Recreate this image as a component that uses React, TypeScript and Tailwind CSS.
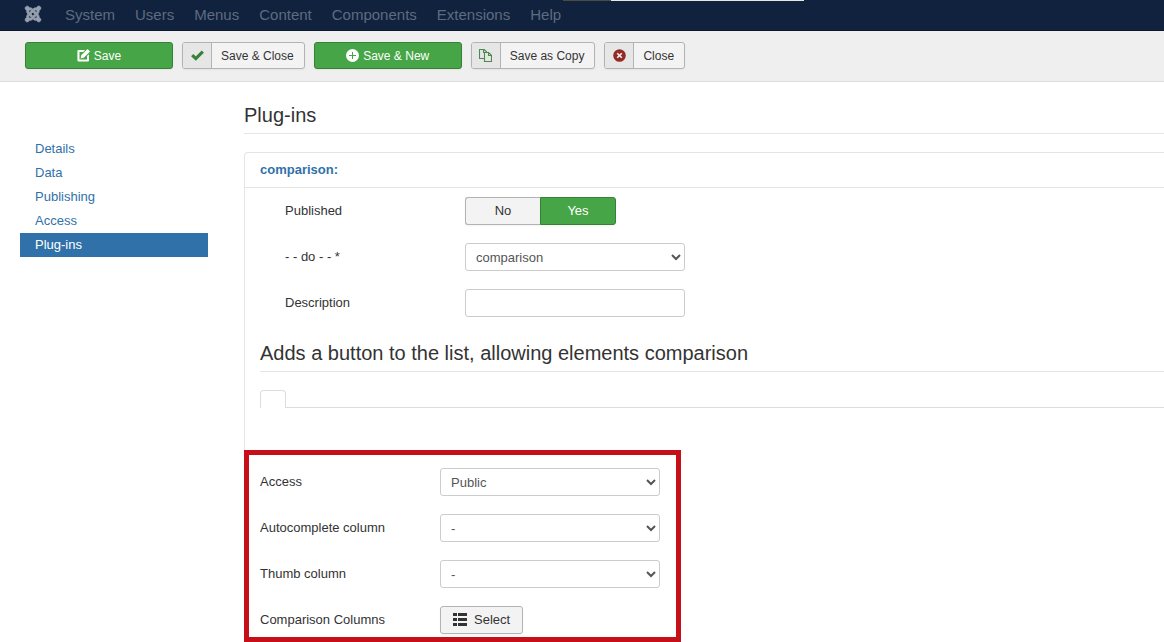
import type { ReactNode } from "react";
import { FaJoomla } from "react-icons/fa";

const menu = ["System", "Users", "Menus", "Content", "Components", "Extensions", "Help"];
const tabs = ["Details", "Data", "Publishing", "Access", "Plug-ins"];

function EditIcon() {
  return (
    <svg viewBox="0 0 13 13" className="size-[13px]" aria-hidden="true">
      <path fill="currentColor" fillRule="evenodd" d="M1.5 1H8L6.2 3H2.5V10.5H10V7L12 5.2V11.2Q12 12.5 10.7 12.5H1.6Q.4 12.5 .4 11.2V2.2Q.4 1 1.5 1Z" />
      <path fill="currentColor" d="M3.6 9.5 4.2 6.2 10 .4Q10.6-.1 11.1.4L12.6 1.9Q13.1 2.4 12.6 2.9L6.8 8.8Z" />
    </svg>
  );
}

function PlusIcon() {
  return (
    <svg viewBox="0 0 13 13" className="size-[13px]" aria-hidden="true">
      <circle cx="6.5" cy="6.5" r="6.5" fill="currentColor" />
      <path d="M6.5 3v7M3 6.5h7" stroke="#46a546" strokeWidth="1" />
    </svg>
  );
}

function CheckIcon() {
  return (
    <svg viewBox="0 0 13 13" className="size-[13px] text-[#378137]" aria-hidden="true">
      <path d="M1.2 6.2 4.8 9.6 11.8 2.6" fill="none" stroke="currentColor" strokeWidth="3.2" />
    </svg>
  );
}

function CopyIcon() {
  return (
    <svg viewBox="0 0 13 13" className="size-[13px] text-[#4b8a4b]" aria-hidden="true">
      <path d="M5 9.5H.5V.5H5.2L7.5 2.8V4M4.5 .5V3.5H7.5" fill="none" stroke="currentColor" strokeWidth="1.1" />
      <path d="M5.5 3.5H9.6L12.5 6.4V12.5H5.5ZM9.5 3.5V6.5H12.5" fill="none" stroke="currentColor" strokeWidth="1.1" />
    </svg>
  );
}

function CloseIcon() {
  return (
    <svg viewBox="0 0 13 13" className="size-[13px] text-[#942a25]" aria-hidden="true">
      <circle cx="6.5" cy="6.5" r="6.3" fill="currentColor" />
      <path d="M4.2 4.2 8.8 8.8M8.8 4.2 4.2 8.8" stroke="#f3f3f3" strokeWidth="1.6" />
    </svg>
  );
}

function ListIcon() {
  return (
    <svg viewBox="0 0 14 13" className="mb-[2px] h-[13px] w-[14px]" aria-hidden="true">
      <path fill="#333" d="M0 0h4v3H0zM5 0H14v3H5zM0 5h4v3H0zM5 5H14v3H5zM0 10h4v3H0zM5 10H14v3H5z" />
    </svg>
  );
}

function PrimaryButton({ icon, children }: { icon: ReactNode; children: ReactNode }) {
  return (
    <button type="button" className="flex h-[27px] w-[148px] items-center justify-center gap-1 rounded-[3px] border border-[#378137] bg-[#46a546] text-xs text-white shadow-xs">
      {icon}
      <span>{children}</span>
    </button>
  );
}

function ToolButton({ icon, children }: { icon: ReactNode; children: ReactNode }) {
  return (
    <button type="button" className="flex h-[27px] items-stretch overflow-hidden rounded-[3px] border border-[#b3b3b3] bg-[#f3f3f3] text-xs text-[#333] shadow-xs">
      <span className="flex w-[29px] items-center justify-center border-r border-[#b3b3b3] bg-[#e6e6e6]">{icon}</span>
      <span className="flex items-center pl-[9px] pr-[10px]">{children}</span>
    </button>
  );
}

function Row({ label, id, children }: { label: string; id: string; children: ReactNode }) {
  return (
    <div className="flex h-7 items-start">
      <label htmlFor={id} className="w-[180px] shrink-0 pt-[5px]">
        {label}
      </label>
      {children}
    </div>
  );
}

function Select({ id, value }: { id: string; value: string }) {
  return (
    <select id={id} className="h-7 w-[220px] rounded-[3px] border border-[#ccc] bg-white px-[6px] text-[#555]">
      <option>{value}</option>
    </select>
  );
}

export default function App() {
  return (
    <div className="overflow-x-hidden bg-white font-['Liberation_Sans',Arial,sans-serif] text-[13px] leading-[18px] text-[#333]">
      <header className="relative flex h-[31px] items-center border-b border-[#0d1a2e] bg-[#10223e] pl-6 text-[15px] text-[#5f6b7e]">
        <div className="absolute left-[563px] top-0 flex h-px">
          <div className="w-12 bg-[#4b4b45]" />
          <div className="w-[193px] bg-[#e4e8e0]" />
        </div>
        <a href="#home" aria-label="Home" className="mb-[2px] mr-[13px] text-[#97a0ae]">
          <FaJoomla className="size-[18px]" stroke="currentColor" strokeWidth={22} />
        </a>
        <nav className="flex">
          {menu.map((item) => (
            <a key={item} href={"#" + item.toLowerCase()} className="px-[10px]">
              {item}
            </a>
          ))}
        </nav>
      </header>

      <div className="flex gap-[9px] border-b border-[#ddd] bg-[#efefef] px-[25px] pb-3 pt-[11px]">
        <PrimaryButton icon={<EditIcon />}>Save</PrimaryButton>
        <ToolButton icon={<CheckIcon />}>Save &amp; Close</ToolButton>
        <PrimaryButton icon={<PlusIcon />}>Save &amp; New</PrimaryButton>
        <ToolButton icon={<CopyIcon />}>Save as Copy</ToolButton>
        <ToolButton icon={<CloseIcon />}>Close</ToolButton>
      </div>

      <div className="flex pl-5">
        <nav className="mr-9 w-[188px] shrink-0 pt-[55px]">
          {tabs.map((tab) => (
            <a
              key={tab}
              href={"#" + tab.toLowerCase()}
              className={tab === "Plug-ins" ? "block bg-[#3071a9] px-[15px] py-[3px] text-white" : "block px-[15px] py-[3px] text-[#3071a9]"}
            >
              {tab}
            </a>
          ))}
        </nav>

        <main className="min-w-0 flex-1 pt-[15px]">
          <h1 className="mb-[18px] border-b border-[#e5e5e5] text-xl leading-9">Plug-ins</h1>

          <section className="rounded-tl-[4px] border-l border-t border-[#e5e5e5]">
            <h2 className="border-b border-[#e5e5e5] px-[15px] py-2 font-bold text-[#3071a9]">
              <a href="#comparison">comparison:</a>
            </h2>

            <div className="pl-[15px] pt-[9px]">
              <div className="flex flex-col gap-[18px] pl-[25px]">
                <div className="flex h-7 items-start" role="group" aria-labelledby="published">
                  <span id="published" className="w-[180px] shrink-0 pt-[5px]">
                    Published
                  </span>
                  <button type="button" aria-pressed="false" className="h-7 w-[75px] rounded-l-[3px] border border-r-0 border-[#b3b3b3] bg-[#f3f3f3] shadow-xs">
                    No
                  </button>
                  <button type="button" aria-pressed="true" className="h-7 w-[76px] rounded-r-[3px] border border-[#378137] bg-[#46a546] text-white shadow-xs">
                    Yes
                  </button>
                </div>
                <Row label="- - do - - *" id="do">
                  <Select id="do" value="comparison" />
                </Row>
                <Row label="Description" id="description">
                  <input id="description" type="text" className="h-7 w-[220px] rounded-[3px] border border-[#ccc] bg-white px-[6px] text-[#555]" />
                </Row>
              </div>

              <h3 className="mb-[18px] mt-[18px] border-b border-[#e5e5e5] text-xl leading-9">
                Adds a button to the list, allowing elements comparison
              </h3>

              <div className="flex items-end">
                <button type="button" aria-label="Options" className="h-[18px] w-[26px] rounded-t-[4px] border border-b-0 border-[#ddd] bg-white" />
                <div className="flex-1 border-b border-[#ddd]" />
              </div>
            </div>

            <div className="-ml-px mt-[42px] flex w-[437px] flex-col gap-[18px] border-[5px] border-[#c60f18] bg-white pb-[3px] pl-[11px] pt-[13px]">
              <Row label="Access" id="access">
                <Select id="access" value="Public" />
              </Row>
              <Row label="Autocomplete column" id="autocomplete">
                <Select id="autocomplete" value="-" />
              </Row>
              <Row label="Thumb column" id="thumb">
                <Select id="thumb" value="-" />
              </Row>
              <Row label="Comparison Columns" id="columns">
                <button id="columns" type="button" className="flex h-7 items-center gap-[7px] rounded-[3px] border border-[#b3b3b3] bg-[#f3f3f3] px-3 shadow-xs">
                  <ListIcon />
                  Select
                </button>
              </Row>
            </div>
          </section>
        </main>
      </div>
    </div>
  );
}
